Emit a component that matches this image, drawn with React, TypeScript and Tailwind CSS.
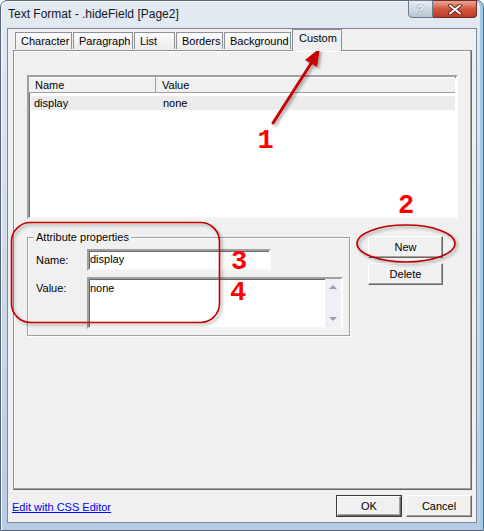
import React from "react";

const sunken =
  "border-2 border-t-[#a0a0a0] border-l-[#a0a0a0] border-r-white border-b-[#f4f4f4] shadow-[inset_1px_1px_0_#696969]";
const raised =
  "border border-t-white border-l-white border-r-[#696969] border-b-[#696969] shadow-[inset_-1px_-1px_0_#a0a0a0] bg-[#f0f0f0]";

const tabs = [
  { label: "Character", w: "w-[57px]" },
  { label: "Paragraph", w: "w-[60px]" },
  { label: "List", w: "w-[41px]" },
  { label: "Borders", w: "w-[47px]" },
  { label: "Background", w: "w-[67px]" },
];

const Btn = ({ children, isDefault }: { children: React.ReactNode; isDefault?: boolean }) => (
  <div className={isDefault ? "border border-[#3a3a3a]" : ""}>
    <div
      className={`${raised} flex items-center justify-center ${
        isDefault ? "h-[20px] w-[64px]" : "h-[22px] w-[66px]"
      }`}>
      {children}
    </div>
  </div>
);

const Annotations = () => (
  <svg className="pointer-events-none absolute left-0 top-0" width="484" height="531" viewBox="0 0 484 531">
    <defs>
      <filter id="shade" x="-20%" y="-20%" width="140%" height="140%">
        <feDropShadow dx="2" dy="2" stdDeviation="1.6" floodColor="#000" floodOpacity="0.35" />
      </filter>
    </defs>
    <g filter="url(#shade)">
      <line x1="273" y1="123" x2="312" y2="62" stroke="#c80000" strokeWidth="3" strokeLinecap="round" />
      <polygon points="320,48 305,60 317,67" fill="#c80000" />
      <rect x="11.5" y="222.5" width="208" height="100" rx="19" fill="none" stroke="#c00000" strokeWidth="1.6" />
      <ellipse cx="406" cy="243.5" rx="49" ry="18.5" fill="none" stroke="#c00000" strokeWidth="1.6" />
    </g>
    <g fill="#ff0000" fontFamily="'Liberation Mono', 'Courier New', monospace" fontWeight="bold" fontSize="27" textAnchor="middle">
      <text x="265.5" y="148">1</text>
      <text x="406" y="213">2</text>
      <text x="239" y="269">3</text>
      <text x="238" y="300">4</text>
    </g>
  </svg>
);

export default function App() {
  return (
    <div className="relative h-[531px] w-[484px] overflow-hidden font-['Liberation_Sans',Arial,sans-serif] text-[11px] leading-[13px] text-black">
      <div className="flex h-full flex-col rounded-t-[7px] border border-[#56677c] bg-gradient-to-b from-[#e4eaf1] via-[#cfdbea] to-[#b7cbe5] px-[6px] pb-[7px] shadow-[inset_-3px_0_0_#9ccbec,inset_1px_1px_0_#f4f8fc]">
        {/* Title bar */}
        <div className="flex h-[27px] items-start">
          <span className="ml-[1px] mt-[6px] text-[12px] leading-[15px] text-[#101828]">Text Format - .hideField [Page2]</span>
          <div className="-mt-px ml-auto flex">
            <div className="flex h-[18px] w-[25px] items-center justify-center rounded-bl-[4px] border border-[#6b7b90] bg-gradient-to-b from-[#e9eef4] to-[#b6c4d5] text-[13px] font-bold leading-none text-white [text-shadow:0_0_1px_#55657a,0_0_1px_#55657a]">
              ?
            </div>
            <div className="flex h-[18px] w-[44px] items-center justify-center rounded-br-[4px] border border-l-0 border-[#6e2b22] bg-gradient-to-b from-[#e8a796] via-[#d0563e] to-[#c0392b]">
              <svg width="14" height="11" viewBox="0 0 14 11">
                <path d="M2 1.5 L12 9.5 M12 1.5 L2 9.5" stroke="#5a1a12" strokeWidth="3.6" strokeLinecap="round" />
                <path d="M2 1.5 L12 9.5 M12 1.5 L2 9.5" stroke="#fff" strokeWidth="2" strokeLinecap="round" />
              </svg>
            </div>
          </div>
        </div>

        {/* Client area */}
        <div className="flex flex-1 flex-col border border-[#7d8898] bg-[#f0f0f0]">
          {/* Tabs */}
          <div className="relative z-10 flex h-[21px] items-end gap-[1px] pl-[7px]">
            {tabs.map((t) => (
              <div
                key={t.label}
                className={`${t.w} mb-px h-[17px] border border-b-0 border-[#8c9199] bg-gradient-to-b from-[#fbfbfb] to-[#ececec] pl-[5px] pt-[2px]`}>
                {t.label}
              </div>
            ))}
            <div className="-mb-px h-[22px] w-[50px] border border-b-0 border-[#8c9199] bg-[#f0f0f0] pl-[6px] pt-[2px]">
              Custom
            </div>
          </div>

          {/* Tab panel */}
          <div className="ml-[5px] mr-[4px] flex h-[440px] flex-col border border-[#8c9199] border-b-[#696969] border-r-[#696969] bg-[#f0f0f0] px-[13px] pt-[24px] shadow-[inset_-1px_-1px_0_#a0a0a0,inset_1px_1px_0_#fff]">
            {/* List view */}
            <div className={`${sunken} h-[144px] bg-white pr-[1px]`}>
              <div className="flex h-[16px] border-b border-[#a0a0a0] bg-[#f0f0f0] shadow-[inset_0_1px_0_#fff]">
                <div className="w-[127px] border-r border-[#a0a0a0] pl-[6px] pt-[2px]">Name</div>
                <div className="pl-[6px] pt-[2px]">Value</div>
              </div>
              <div className="mt-[3px] ml-[2px] flex h-[14px] bg-[#ececec] pt-px">
                <div className="w-[132px] pl-[3px]">display</div>
                <div>none</div>
              </div>
            </div>

            {/* Attributes + buttons */}
            <div className="mt-[12px] flex items-start">
              <fieldset className="h-[105px] w-[323px] min-w-0 border border-[#a0a0a0] pb-[6px] pl-[8px] pr-[6px] shadow-[inset_1px_1px_0_#fff,1px_1px_0_#fff]">
                <legend className="-ml-[2px] px-[2px]">Attribute properties</legend>
                <div className="mt-[5px] flex items-center">
                  <div className="w-[51px]">Name:</div>
                  <div className={`${sunken} h-[22px] w-[184px] bg-white pl-[1px] pt-[2px]`}>display</div>
                </div>
                <div className="mt-[6px] flex items-start">
                  <div className="w-[51px] pt-[5px]">Value:</div>
                  <div className={`${sunken} flex h-[52px] w-[256px] bg-white`}>
                    <div className="flex-1 pl-[1px] pt-[3px]">none</div>
                    <div className="flex w-[16px] flex-col items-center justify-between bg-[#eef0f5] py-[6px]">
                      <div className="h-0 w-0 border-x-[4px] border-b-[4px] border-x-transparent border-b-[#9aa0aa]" />
                      <div className="h-0 w-0 border-x-[4px] border-t-[4px] border-x-transparent border-t-[#9aa0aa]" />
                    </div>
                  </div>
                </div>
              </fieldset>
              <div className="ml-[18px] mt-[5px] flex flex-col gap-[5px]">
                <div className={`${raised} flex h-[22px] w-[75px] items-center justify-center`}>New</div>
                <div className={`${raised} flex h-[22px] w-[75px] items-center justify-center`}>Delete</div>
              </div>
            </div>
          </div>

          {/* Footer */}
          <div className="flex flex-1 items-start px-[4px] pt-[5px]">
            <a className="mt-[6px] text-[#0000ff] underline">Edit with CSS Editor</a>
            <div className="ml-auto flex gap-[4px]">
              <Btn isDefault>OK</Btn>
              <Btn>Cancel</Btn>
            </div>
          </div>
        </div>
      </div>
      <Annotations />
    </div>
  );
}
